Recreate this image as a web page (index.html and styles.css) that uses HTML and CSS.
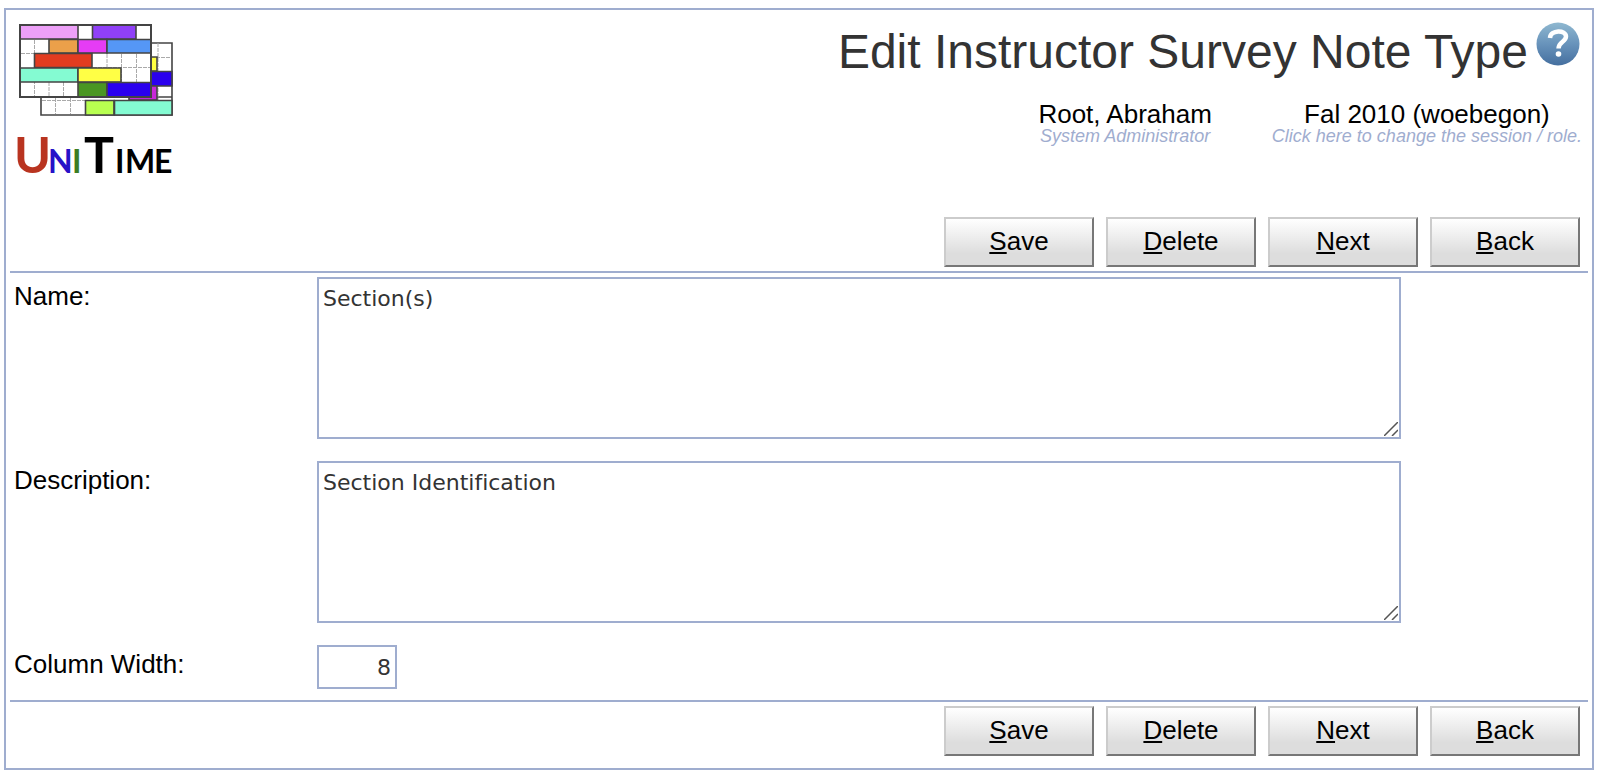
FILE: index.html
```html
<!DOCTYPE html>
<html lang="en">
<head>
<meta charset="utf-8">
<title>Edit Instructor Survey Note Type</title>
<link rel="stylesheet" href="styles.css">
</head>
<body>
<main class="page">
  <header class="header">
    <svg class="logo" viewBox="18 22 156 160" role="img" aria-label="UniTime">
      <g stroke="#444" stroke-width="1.6">
        <path fill="#fff" d="M41 97H172V115H41zM150 43H172V115H150z"/>
        <path fill="none" stroke="#aaa" stroke-width="1" stroke-dasharray="4 1" d="M55.500 98V114M70.500 98V114M158 43V100M151 57.500H171M42 100.500H127"/>
        <path fill="#ffff40" d="M150 57H157V71H150z"/>
        <path fill="#2a00ee" d="M150 71.500H172V86H150z"/>
        <path fill="#c828d8" d="M129 86H157V100H129z"/>
        <path fill="#b8ff50" d="M85.500 100.500H114V115H85.500z"/>
        <path fill="#84fbd2" d="M114.500 100.500H172V115H114.500z"/>
        <path fill="#fff" d="M20 25H151V97H20z"/>
        <path fill="none" stroke="#aaa" stroke-width="1" stroke-dasharray="4 1" d="M34.500 40V96M49 82V96M63.500 82V96M107 54V68M121.500 54V82M136.500 54V82M21 53.500H50M93 67.500H150"/>
        <path fill="#eda0f8" d="M20 25H78V39H20z"/>
        <path fill="#9040f8" d="M92.500 25H136V39H92.500z"/>
        <path fill="#eba04a" d="M49 39.500H78V53H49z"/>
        <path fill="#e53cf5" d="M78 39.500H107V53H78z"/>
        <path fill="#5597f6" d="M107 39.500H151V53H107z"/>
        <path fill="#e23c20" d="M34.500 53.500H92V67.500H34.500z"/>
        <path fill="#84fbd2" d="M20 68H78V82H20z"/>
        <path fill="#ffff45" d="M78 68H121V82H78z"/>
        <path fill="#4a9622" d="M78 82.500H107V97H78z"/>
        <path fill="#2a00ee" d="M107 82.500H151V97H107z"/>
        <path fill="none" stroke-width="2" d="M20 25H151V97H20z"/>
      </g>
      <g class="logo-name">
        <text x="14" y="173" class="logo-big" fill="#b93420">U</text>
        <text x="48" y="173" class="logo-small" fill="#2712c8">N</text>
        <text x="72" y="173" class="logo-small" fill="#3d7d22">I</text>
        <text x="84" y="173" class="logo-big" fill="#000">T</text>
        <text x="115" y="173" class="logo-small" fill="#000">I</text>
        <text x="125" y="173" class="logo-small" fill="#000">M</text>
        <text x="154" y="173" class="logo-small" fill="#000">E</text>
      </g>
    </svg>
    <div class="heading">
      <div class="title-row">
        <h1 class="title">Edit Instructor Survey Note Type</h1>
        <button type="button" class="help" aria-label="Help">
          <svg class="help-icon" viewBox="0 0 44 44" aria-hidden="true">
            <defs>
              <linearGradient id="help-fill" x1="0" y1="0" x2="0" y2="1">
                <stop offset="0" stop-color="#8fb8d0"/>
                <stop offset="0.500" stop-color="#6893bb"/>
                <stop offset="1" stop-color="#456f9f"/>
              </linearGradient>
            </defs>
            <circle cx="22" cy="22" r="21.500" fill="url(#help-fill)"/>
            <path fill="none" stroke="#fff" stroke-width="4.500" d="M14 16C14.500 7.500 30 7.500 30 14.500C30 20 22.500 19.500 22.500 26.500"/>
            <circle cx="22.500" cy="32" r="2.800" fill="#fff"/>
          </svg>
        </button>
      </div>
      <div class="session">
        <a class="session-item" href="#user">
          <span class="session-value">Root, Abraham</span>
          <span class="session-hint">System Administrator</span>
        </a>
        <a class="session-item" href="#session">
          <span class="session-value">Fal 2010 (woebegon)</span>
          <span class="session-hint">Click here to change the session / role.</span>
        </a>
      </div>
    </div>
  </header>
  <form class="form">
    <div class="actions">
      <button type="button" class="btn"><u>S</u>ave</button>
      <button type="button" class="btn"><u>D</u>elete</button>
      <button type="button" class="btn"><u>N</u>ext</button>
      <button type="button" class="btn"><u>B</u>ack</button>
    </div>
    <div class="fields">
      <label class="label" for="name">Name:</label>
      <textarea class="box area" id="name" spellcheck="false">Section(s)</textarea>
      <label class="label" for="description">Description:</label>
      <textarea class="box area" id="description" spellcheck="false">Section Identification</textarea>
      <label class="label" for="width">Column Width:</label>
      <input class="box number" id="width" type="text" inputmode="numeric" value="8">
    </div>
    <div class="actions">
      <button type="button" class="btn"><u>S</u>ave</button>
      <button type="button" class="btn"><u>D</u>elete</button>
      <button type="button" class="btn"><u>N</u>ext</button>
      <button type="button" class="btn"><u>B</u>ack</button>
    </div>
  </form>
</main>
</body>
</html>
```
FILE: styles.css
```css
* {
  box-sizing: border-box;
}

body {
  margin: 8px 6px 8px 4px;
  background: #fff;
  color: #000;
  font-family: "Liberation Sans", Arial, sans-serif;
  font-size: 26px;
}

.page {
  border: 2px solid #9fadcf;
  padding: 12px 4px;
}

.header {
  display: flex;
  justify-content: space-between;
  padding: 0 6px 0 8px;
  margin-bottom: 35px;
}

.logo {
  width: 156px;
  height: 160px;
  flex: none;
  overflow: visible;
}

.logo-name {
  font-family: Lato, "Open Sans", sans-serif;
  font-weight: bold;
}

.logo-big {
  font-size: 50px;
}

.logo-small {
  font-size: 32px;
}

.heading {
  display: flex;
  flex-direction: column;
  align-items: flex-end;
  gap: 21px;
}

.title-row {
  display: flex;
  align-items: flex-start;
  gap: 8px;
  padding-right: 2px;
}

.title {
  margin: 0;
  color: #333;
  font-size: 48px;
  font-weight: normal;
  line-height: 60px;
}

.help {
  border: 0;
  padding: 0;
  background: none;
  cursor: pointer;
}

.help-icon {
  display: block;
  width: 44px;
  height: 44px;
}

.session {
  display: flex;
  gap: 60px;
}

.session-item {
  display: flex;
  flex-direction: column;
  align-items: center;
  color: #000;
  text-decoration: none;
}

.session-value {
  line-height: 22px;
}

.session-hint {
  color: #9fadcf;
  font-size: 18px;
  font-style: italic;
  line-height: 22px;
}

.actions {
  display: flex;
  justify-content: flex-end;
  gap: 12px;
  padding: 0 8px;
}

.btn {
  width: 150px;
  height: 50px;
  border: 2px solid;
  border-color: #ccc #777 #777 #ccc;
  padding: 0 0 2px;
  background: linear-gradient(#fff, #ddd 75%);
  color: #000;
  font: inherit;
  cursor: pointer;
}

.fields {
  display: grid;
  grid-template-columns: 303px 1fr;
  row-gap: 22px;
  margin: 4px 0;
  border: solid #9fadcf;
  border-width: 2px 0;
  padding: 4px 0 11px 4px;
}

.label {
  line-height: 38px;
}

.box {
  display: block;
  margin: 0;
  border: 2px solid #9fadcf;
  border-radius: 0;
  padding: 6px 4px;
  background: #fff;
  color: #333;
  font-family: Verdana, "DejaVu Sans", sans-serif;
  font-size: 22px;
  font-variant-ligatures: none;
  line-height: 27px;
}

.area {
  width: 100%;
  max-width: 1084px;
  height: 162px;
  resize: both;
}

.area::-webkit-scrollbar {
  width: 18px;
  height: 18px;
}

.area::-webkit-resizer {
  background: url("data:image/svg+xml,%3Csvg xmlns='http://www.w3.org/2000/svg' width='14' height='14'%3E%3Cpath d='M0 14L14 0M8 14L14 8' stroke='%23555' stroke-width='1.500'/%3E%3C/svg%3E") no-repeat right 1px bottom 1px;
}

.number {
  width: 80px;
  height: 44px;
  text-align: right;
}
```
